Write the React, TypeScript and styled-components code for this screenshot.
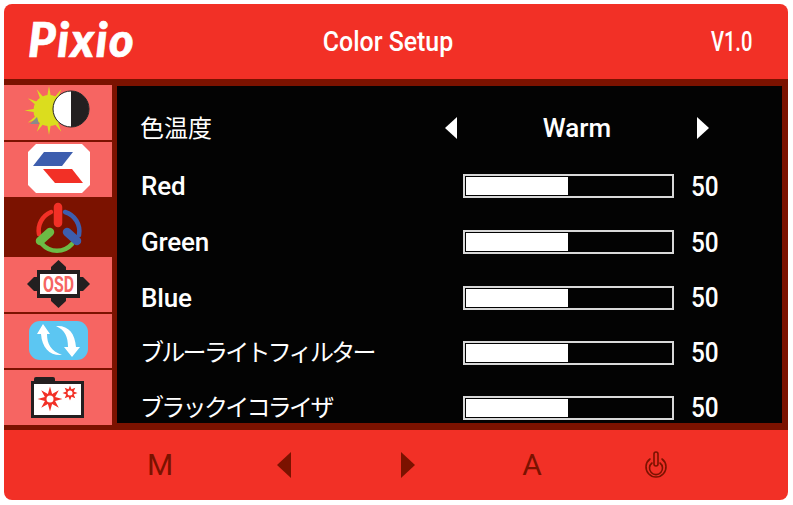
import React from "react";
import styled, { createGlobalStyle } from "styled-components";

const Global = createGlobalStyle`
  html, body { margin: 0; padding: 0; background: #fff; }
  #root { width: 793px; height: 505px; }
`;

const RED = "#f23026";
const DARK = "#7b1200";
const SALMON = "#f66562";
const INK = "#231f20";
const UI_FONT = `Roboto, "Noto Sans CJK JP", sans-serif`;

const Page = styled.div`
  width: 793px;
  height: 505px;
  padding: 4px 5px 5px 4px;
  box-sizing: border-box;
  font-family: ${UI_FONT};
`;
const Panel = styled.div`
  width: 784px;
  height: 496px;
  border-radius: 8px;
  overflow: hidden;
  background: ${RED};
  display: flex;
  flex-direction: column;
`;
const Header = styled.header`
  height: 75px;
  flex: none;
  display: grid;
  grid-template-columns: 24px 130px 460px 1fr;
  align-items: center;
  color: #fff;
`;
const Logo = styled.div`
  grid-column: 2;
  font-family: Lato, sans-serif;
  font-style: italic;
  font-weight: 900;
  font-size: 47px;
  letter-spacing: 1.6px;
  -webkit-text-stroke: 0.7px #fff;
  line-height: 1;
  margin-top: -4px;
`;
const Title = styled.div`
  grid-column: 3;
  text-align: center;
  font-size: 28px;
  font-weight: 500;
  transform: scaleX(0.89);
  white-space: nowrap;
`;
const Version = styled.div`
  grid-column: 4;
  font-size: 28px;
  font-weight: 500;
  transform: scaleX(0.72);
  transform-origin: 0 50%;
  padding-left: 129px;
  white-space: nowrap;
`;
const Middle = styled.div`
  height: 351px;
  flex: none;
  background: ${DARK};
  padding: 6px 6px 7px 0;
  box-sizing: border-box;
  display: flex;
  gap: 5px;
`;
const Sidebar = styled.nav`
  width: 108px;
  flex: none;
  display: flex;
  flex-direction: column;
  gap: 2px;
`;
const SideItem = styled.div<{ $h: number; $active?: boolean }>`
  height: ${(p) => p.$h}px;
  flex: none;
  background: ${(p) => (p.$active ? DARK : SALMON)};
`;
const SideIcon = styled.svg`
  display: block;
  width: 108px;
  height: 100%;
`;
const Content = styled.main`
  flex: 1;
  margin-top: 1px;
  background: #030303;
  overflow: hidden;
  display: flex;
  flex-direction: column;
  padding: 12px 0 0 24px;
  color: #fff;
`;
const Row = styled.div<{ $h: number }>`
  height: ${(p) => p.$h}px;
  flex: none;
  display: flex;
  align-items: center;
`;
const Label = styled.div<{ $kana?: boolean; $cjk?: boolean }>`
  width: ${(p) => (p.$cjk ? 323 : 322)}px;
  flex: none;
  font-size: ${(p) => (p.$cjk ? 24 : 26)}px;
  font-weight: ${(p) => (p.$cjk ? 400 : 500)};
  white-space: nowrap;
  letter-spacing: ${(p) => (p.$kana ? "-2.7px" : p.$cjk ? "0" : "-0.2px")};
  margin: ${(p) => (p.$cjk ? "-4px 0 0 -1px" : "0")};
`;
const Picker = styled.div`
  width: 264px;
  margin-left: -18px;
  display: flex;
  align-items: center;
  justify-content: space-between;
`;
const PickerValue = styled.div`
  font-size: 26px;
  font-weight: 500;
`;
const Tri = styled.div<{ $dir: "left" | "right"; $c: string; $w: number; $h: number }>`
  width: 0;
  height: 0;
  border-style: solid;
  border-color: transparent;
  border-width: ${(p) => p.$h / 2}px ${(p) => (p.$dir === "right" ? 0 : p.$w)}px ${(p) => p.$h / 2}px
    ${(p) => (p.$dir === "right" ? p.$w : 0)}px;
  ${(p) => (p.$dir === "right" ? `border-left-color: ${p.$c};` : `border-right-color: ${p.$c};`)}
`;
const Bar = styled.div`
  width: 211px;
  height: 24px;
  box-sizing: border-box;
  border: 2px solid #d8d8d8;
  padding: 1px 2px 1px 1px;
  flex: none;
`;
const Fill = styled.div`
  height: 100%;
  background: #fff;
`;
const Value = styled.div`
  margin-left: 17px;
  font-size: 28px;
  font-weight: 500;
  transform: scaleX(0.87);
  transform-origin: 0 50%;
`;
const Footer = styled.footer`
  flex: 1;
  display: grid;
  grid-template-columns: repeat(5, 124px);
  padding-left: 94px;
  align-items: center;
  justify-items: center;
  color: ${DARK};
`;
const Key = styled.div`
  font-size: 30px;
  font-weight: 400;
  line-height: 1;
`;

function sun(cx: number, cy: number, R: number, r: number, n: number) {
  const pts: string[] = [];
  for (let i = 0; i < n * 2; i++) {
    const a = (Math.PI * i) / n - Math.PI / 2;
    const d = i % 2 ? r : R;
    pts.push(`${(cx + d * Math.cos(a)).toFixed(1)},${(cy + d * Math.sin(a)).toFixed(1)}`);
  }
  return pts.join(" ");
}

const BrightnessIcon = () => (
  <SideIcon viewBox="4 85 108 55">
    <polygon points={sun(49, 110.5, 24.5, 10, 12)} fill="#dbdd1e" />
    <circle cx="49" cy="110.5" r="15.5" fill="#dbdd1e" />
    <polygon points="30,124 37,117 39,124" fill="#8a8a8a" />
    <circle cx="71" cy="109" r="18" fill="#fff" stroke={INK} strokeWidth="1" />
    <path d="M71 91a18 18 0 0 1 0 36z" fill={INK} />
  </SideIcon>
);
const ImageIcon = () => (
  <SideIcon viewBox="4 142 108 55">
    <polygon points="36,144 82,144 90,152 90,185 82,193 36,193 28,185 28,152" fill="#fff" />
    <polygon points="44,152 73,152 62,166 33,166" fill="#3d5eae" />
    <polygon points="43,169 72,169 83,183 55,183" fill={RED} />
  </SideIcon>
);
const ColorIcon = () => (
  <SideIcon viewBox="4 199 108 56">
    <g fill="none" strokeLinecap="round">
      <path d="M39 234A20 20 0 0 1 51 212" stroke={RED} strokeWidth="4.5" />
      <path d="M65 212A20 20 0 0 1 79 235" stroke="#3d5eae" strokeWidth="4.5" />
      <path d="M42 244A20 20 0 0 0 72 244" stroke="#6cbb45" strokeWidth="4.5" />
      <path d="M58 207V223" stroke={RED} strokeWidth="8.5" />
      <path d="M67 232L77 241" stroke="#3d5eae" strokeWidth="8.5" />
      <path d="M50 232L40 241" stroke="#6cbb45" strokeWidth="8.5" />
    </g>
  </SideIcon>
);
const OsdIcon = () => (
  <SideIcon viewBox="4 255 108 55">
    <g fill={INK}>
      <polygon points="58.5,258 66,265 66,268 51,268 51,265" />
      <polygon points="58.5,306 66,299 66,296 51,296 51,299" />
      <polygon points="27,282 34,275 37,275 37,289 34,289" />
      <polygon points="90,282 83,275 80,275 80,289 83,289" />
      <rect x="37" y="268" width="43" height="28" />
    </g>
    <rect x="40" y="272" width="37" height="20" fill="#fff" />
    <text
      x="58.5"
      y="290"
      textAnchor="middle"
      fontFamily="Roboto, sans-serif"
      fontWeight="700"
      fontSize="22"
      textLength="31"
      lengthAdjust="spacingAndGlyphs"
      fill={SALMON}
    >
      OSD
    </text>
  </SideIcon>
);
const ResetIcon = () => (
  <SideIcon viewBox="4 312 108 54">
    <rect x="29" y="319" width="59" height="39" rx="11" fill="#5cc6f2" />
    <path d="M37 332L43 322L50 332H47C47 342 51 349 62 353C50 354 42 346 41 332Z" fill="#fff" />
    <path d="M56 324C68 323 75 331 76 345H80L72 355L64 345H68C68 335 65 328 56 324Z" fill="#fff" />
  </SideIcon>
);
const SetupIcon = () => (
  <SideIcon viewBox="4 368 108 55">
    <path d="M34 379V377Q34 375 36 375H53Q55 375 55 377V379Z" fill={INK} />
    <rect x="31" y="379" width="53" height="37" fill={INK} />
    <rect x="34" y="382" width="47" height="31" fill="#fff" />
    <polygon points={sun(50, 397, 12.5, 5.5, 8)} fill={RED} />
    <circle cx="50" cy="397" r="3.5" fill="#fff" />
    <polygon points={sun(70, 391, 7.5, 4, 8)} fill={RED} />
    <circle cx="70" cy="391" r="2.5" fill="#fff" />
  </SideIcon>
);
const PowerIcon = () => (
  <svg width="24" height="28" viewBox="0 0 24 28" fill="none" stroke={DARK}>
    <rect x="10" y="1" width="4" height="14" rx="2" strokeWidth="1.6" />
    <path d="M6 8a10 10 0 1 0 12 0" strokeWidth="1.6" strokeLinecap="round" />
    <path d="M8 12a6.5 6.5 0 1 0 8 0" strokeWidth="1.6" strokeLinecap="round" />
  </svg>
);

const sliders = [
  { label: "Red", h: 56, value: 50 },
  { label: "Green", h: 56, value: 50 },
  { label: "Blue", h: 55, value: 50 },
  { label: "ブルーライトフィルター", h: 55, value: 50, kana: true },
  { label: "ブラックイコライザ", h: 55, value: 50, kana: true },
];

export default function App() {
  return (
    <Page>
      <Global />
      <Panel>
        <Header>
          <Logo>Pixio</Logo>
          <Title>Color Setup</Title>
          <Version>V1.0</Version>
        </Header>
        <Middle>
          <Sidebar>
            <SideItem $h={55}><BrightnessIcon /></SideItem>
            <SideItem $h={55}><ImageIcon /></SideItem>
            <SideItem $h={56} $active><ColorIcon /></SideItem>
            <SideItem $h={55}><OsdIcon /></SideItem>
            <SideItem $h={54}><ResetIcon /></SideItem>
            <SideItem $h={55}><SetupIcon /></SideItem>
          </Sidebar>
          <Content>
            <Row $h={60}>
              <Label $cjk>色温度</Label>
              <Picker>
                <Tri $dir="left" $c="#fff" $w={12} $h={23} />
                <PickerValue>Warm</PickerValue>
                <Tri $dir="right" $c="#fff" $w={12} $h={23} />
              </Picker>
            </Row>
            {sliders.map((s, i) => (
              <Row key={i} $h={s.h}>
                <Label $kana={s.kana} $cjk={s.kana}>{s.label}</Label>
                <Bar>
                  <Fill style={{ width: `${s.value}%` }} />
                </Bar>
                <Value>{s.value}</Value>
              </Row>
            ))}
          </Content>
        </Middle>
        <Footer>
          <Key>M</Key>
          <Tri $dir="left" $c={DARK} $w={14} $h={27} />
          <Tri $dir="right" $c={DARK} $w={14} $h={27} />
          <Key>A</Key>
          <PowerIcon />
        </Footer>
      </Panel>
    </Page>
  );
}
